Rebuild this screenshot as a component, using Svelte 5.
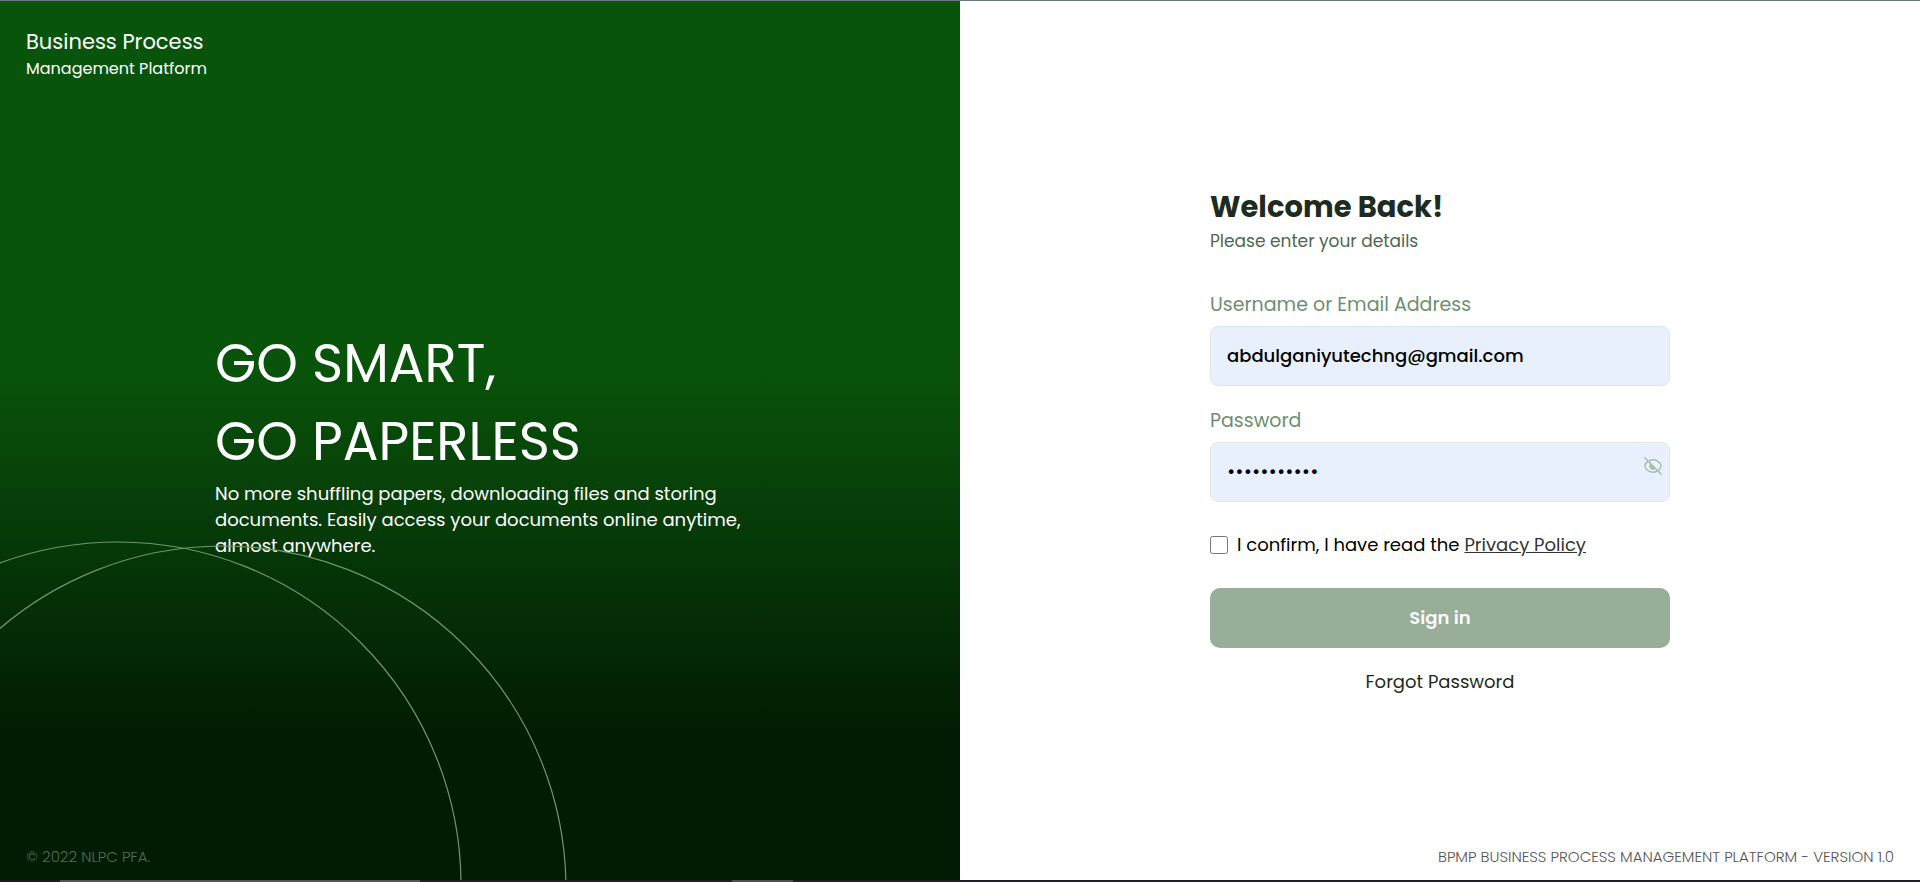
<script>
  let email = $state('abdulganiyutechng@gmail.com');
  let password = $state('password123');
  let accepted = $state(false);
  let visible = $state(false);
</script>

<div class="page">
  <main>
    <section class="brand">
      <svg class="rings" viewBox="0 0 600 340" aria-hidden="true">
        <circle cx="118" cy="345" r="343" />
        <circle cx="223" cy="349" r="343" />
      </svg>
      <header>
        <p class="name">Business Process</p>
        <p class="sub">Management Platform</p>
      </header>
      <div class="pitch">
        <h1>GO SMART,<br />GO PAPERLESS</h1>
        <p>No more shuffling papers, downloading files and storing documents. Easily access your documents online anytime, almost anywhere.</p>
      </div>
      <footer>© 2022 NLPC PFA.</footer>
    </section>

    <section class="login">
      <form onsubmit={(e) => e.preventDefault()}>
        <h2>Welcome Back!</h2>
        <p class="hint">Please enter your details</p>

        <label class="caption" for="email">Username or Email Address</label>
        <input class="field" id="email" type="text" bind:value={email} />

        <label class="caption second" for="password">Password</label>
        <div class="secret">
          <input class="field" id="password" type={visible ? 'text' : 'password'} value={password} oninput={(e) => (password = e.currentTarget.value)} />
          <button class="eye" type="button" aria-label="Show password" onclick={() => (visible = !visible)}>
            <svg viewBox="0 0 18 18" aria-hidden="true">
              <path d="M5.6 3.7C6.6 3.1 7.7 2.8 9 2.8c4.700 0 8 4 8 6.200 0 1.100-.8 2.600-2.100 3.900M3.300 4.900C1.800 6.200 1 7.800 1 9c0 2.200 3.300 6.200 8 6.200 1.500 0 2.900-.4 4-1.100M7 7a2.800 2.800 0 0 0 4 4M.5.5l17 17" />
              <path class="pupil" d="M6.800 6.800l4.600 4.600a3 3 0 0 1-4.600-4.600z" />
            </svg>
          </button>
        </div>

        <div class="consent">
          <input id="consent" type="checkbox" bind:checked={accepted} />
          <label for="consent">I confirm, I have read the</label>
          <a href="#privacy">Privacy Policy</a>
        </div>

        <button class="submit" type="submit">Sign in</button>
        <a class="forgot" href="#forgot">Forgot Password</a>
      </form>
      <footer>BPMP BUSINESS PROCESS MANAGEMENT PLATFORM - VERSION 1.0</footer>
    </section>
  </main>
  <div class="edge"></div>
</div>

<style>
  :global(body) {
    margin: 0;
    background: #fff;
  }
  .page {
    box-sizing: border-box;
    min-height: 100vh;
    display: flex;
    flex-direction: column;
    border-top: 1px solid #6b7a82;
    font-family: Poppins, Inter, sans-serif;
    font-size: 16px;
  }
  .page * {
    box-sizing: border-box;
  }
  p, h1, h2 {
    margin: 0;
    font-weight: 400;
  }
  main {
    flex: 1;
    display: grid;
    grid-template-columns: 1fr 1fr;
  }
  section {
    position: relative;
    display: flex;
    flex-direction: column;
    padding: 26px 26px 13px;
  }
  .brand {
    overflow: hidden;
    color: #fff;
    background: linear-gradient(180deg, #09540b 41%, #021b03 84%);
  }
  .rings {
    position: absolute;
    left: 0;
    bottom: 0;
    width: 600px;
    height: 340px;
    z-index: 1;
    fill: none;
    stroke: #6f9671;
    stroke-width: 1.2;
  }
  .name {
    font-size: 21px;
    line-height: 30px;
  }
  .sub {
    font-size: 16px;
    line-height: 24px;
  }
  .pitch {
    flex: 1;
    display: flex;
    flex-direction: column;
    justify-content: center;
    width: 530px;
    margin: 0 auto;
    padding-bottom: 44px;
  }
  h1 {
    font-size: 53px;
    line-height: 78px;
  }
  .pitch p {
    font-size: 18px;
    line-height: 26px;
  }
  footer {
    font-size: 15px;
    line-height: 20px;
    font-weight: 300;
  }
  .brand footer {
    color: #4f6e51;
  }
  .login footer {
    text-align: right;
    color: #555;
  }
  form {
    flex: 1;
    display: flex;
    flex-direction: column;
    justify-content: center;
    width: 460px;
    margin: 0 auto;
    padding-top: 7px;
  }
  h2 {
    font-size: 29px;
    line-height: 42px;
    font-weight: 700;
    color: #1e2b20;
  }
  .hint {
    margin-bottom: 37px;
    font-size: 17px;
    line-height: 26px;
    color: #4d6850;
  }
  .caption {
    font-size: 19px;
    line-height: 28px;
    margin-bottom: 7px;
    color: #6b9070;
  }
  .second {
    margin-top: 21px;
  }
  .field {
    display: block;
    width: 100%;
    height: 60px;
    padding: 0 16px;
    border: 1px solid #dcebe0;
    border-radius: 8px;
    background: #e8f0fe;
    color: #000;
    font-family: inherit;
    font-size: 18px;
    font-weight: 500;
  }
  .secret {
    position: relative;
  }
  .eye {
    position: absolute;
    right: 8px;
    top: 15px;
    width: 18px;
    height: 18px;
    padding: 0;
    border: 0;
    background: none;
  }
  .eye svg {
    display: block;
    width: 18px;
    height: 18px;
    fill: none;
    stroke: #a4bfa8;
    stroke-width: 1.4;
    stroke-linecap: round;
  }
  .eye .pupil {
    fill: #a4bfa8;
    stroke: none;
  }
  .consent {
    display: flex;
    align-items: center;
    gap: 5px;
    margin: 29px 0;
    font-size: 18px;
    line-height: 28px;
  }
  .consent input {
    width: 18px;
    height: 18px;
    margin: 0 4px 0 0;
  }
  .consent a {
    color: #333;
  }
  .submit {
    height: 60px;
    border: 0;
    border-radius: 10px;
    background: #98ae99;
    color: #fafafa;
    font-family: inherit;
    font-size: 18px;
    font-weight: 600;
  }
  .forgot {
    align-self: center;
    margin-top: 20px;
    font-size: 18px;
    line-height: 28px;
    color: #1e2b20;
    text-decoration: none;
  }
  .edge {
    height: 2px;
    background: linear-gradient(90deg, #1d1b20 60px, #555 60px 420px, #1b2026 420px 732px, #4b5052 732px 793px, #1b1f28 793px);
  }
</style>
